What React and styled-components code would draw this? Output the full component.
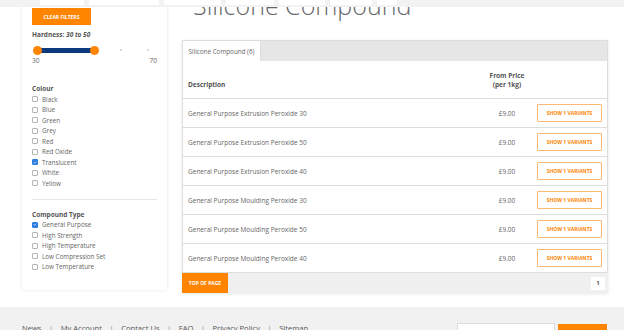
import React from "react";
import styled, { createGlobalStyle } from "styled-components";

const ORANGE = "#ff8400";

const GlobalStyle = createGlobalStyle`
  html, body {
    margin: 0;
    padding: 0;
    background: #fff;
    font-family: "Open Sans", "Liberation Sans", sans-serif;
    color: #666;
  }
  * { box-sizing: border-box; }
`;

// Header (scrolled, only its bottom edge shows)
const TopBar = styled.div`
  position: fixed;
  top: 0;
  left: 0;
  right: 0;
  height: 7px;
  background: #f2f2f2;
  display: flex;
  gap: 5px;
  padding-left: 40px;
  z-index: 5;
`;

const TopTab = styled.div`
  width: ${p => p.w}px;
  height: 5px;
  background: #fff;
`;

const Page = styled.div`
  display: flex;
  align-items: flex-start;
  gap: 15px;
  padding: 0 16px 14px 22px;
`;

// Sidebar
const Sidebar = styled.aside`
  width: 145px;
  height: 290px;
  background: #fff;
  box-shadow: 0 0 3px rgba(0, 0, 0, 0.12);
  padding: 8px 10px 0;
  display: flex;
  flex-direction: column;
`;

const ClearButton = styled.button`
  width: 59px;
  height: 17px;
  border: none;
  background: ${ORANGE};
  color: #fff;
  font-family: inherit;
  font-size: 5px;
  font-weight: 700;
  text-transform: uppercase;
  padding: 0;
  cursor: pointer;
`;

const FilterLabel = styled.div`
  font-size: 6.5px;
  font-weight: 700;
  line-height: 10px;
  color: #555;
  margin-top: ${p => p.mt || 0}px;
  em { font-style: italic; }
`;

const Slider = styled.div`
  position: relative;
  height: 12px;
  margin-top: 4px;
  width: 125px;
`;

const SliderFill = styled.div`
  position: absolute;
  top: 3.5px;
  height: 5px;
  background: #0b3a7c;
`;

const Handle = styled.div`
  position: absolute;
  top: 1.5px;
  width: 9px;
  height: 9px;
  margin-left: -4.5px;
  border-radius: 50%;
  background: ${ORANGE};
`;

const Tick = styled.div`
  position: absolute;
  top: 5px;
  width: 2px;
  height: 2px;
  border-radius: 50%;
  background: #ccc;
`;

const SliderScale = styled.div`
  display: flex;
  justify-content: space-between;
  width: 125px;
  margin-top: 1px;
  font-size: 6.5px;
  line-height: 8px;
  color: #666;
`;

const CheckRow = styled.label`
  display: flex;
  align-items: center;
  gap: 4px;
  height: 10.5px;
  font-size: 6.3px;
  color: #666;
`;

const Box = styled.span`
  width: 6px;
  height: 6px;
  border-radius: 1px;
  border: 0.7px solid ${p => (p.checked ? "#2a7de1" : "#b5b5b5")};
  background: ${p => (p.checked ? "#2a7de1" : "#fff")};
  display: flex;
  align-items: center;
  justify-content: center;
  flex-shrink: 0;
`;

const Divider = styled.hr`
  border: none;
  border-top: 1px solid #e6e6e6;
  margin: 10px 0 0;
  width: 125px;
`;

// Main
const Main = styled.main`
  flex: 1;
  display: flex;
  flex-direction: column;
`;

const Title = styled.h1`
  margin: -8px 0 22px 11px;
  font-size: 25px;
  line-height: 26px;
  font-weight: 300;
  color: #666;
`;

const Panel = styled.section`
  box-shadow: 0 1px 3px rgba(0, 0, 0, 0.1);
`;

const TabBar = styled.div`
  display: flex;
  height: 21px;
  background: #e6e6e6;
  border: 1px solid #ddd;
  border-bottom: none;
`;

const Tab = styled.div`
  width: 78px;
  background: #fff;
  border-right: 1px solid #ddd;
  display: flex;
  align-items: center;
  justify-content: center;
  font-size: 6.3px;
  color: #666;
`;

const Table = styled.div`
  border-left: 1px solid #ddd;
  border-right: 1px solid #ddd;
  background: #fff;
`;

const Row = styled.div`
  display: grid;
  grid-template-columns: 1fr 50px 65px;
  column-gap: 5px;
  align-items: ${p => (p.head ? "end" : "center")};
  height: ${p => (p.head ? 38 : 29)}px;
  padding: ${p => (p.head ? "0 5px 9px" : "0 5px")};
  border-bottom: 1px solid #ddd;
  font-size: 6.5px;
  color: ${p => (p.head ? "#555" : "#666")};
  font-weight: ${p => (p.head ? 700 : 400)};
`;

const HeadCell = styled.div`
  line-height: 9px;
  text-align: ${p => p.align || "left"};
`;

const Price = styled.div`
  text-align: center;
`;

const VariantButton = styled.button`
  height: 18px;
  width: 65px;
  padding: 0;
  background: #fff;
  border: 1px solid #ffb873;
  border-radius: 1px;
  color: ${ORANGE};
  font-family: inherit;
  font-size: 5px;
  font-weight: 700;
  text-transform: uppercase;
`;

const TableFoot = styled.div`
  display: flex;
  justify-content: space-between;
  align-items: center;
  height: 20px;
  background: #f0f0f0;
  padding-right: 3px;
`;

const TopButton = styled.button`
  height: 20px;
  width: 46px;
  border: none;
  padding: 0;
  background: ${ORANGE};
  color: #fff;
  font-family: inherit;
  font-size: 5px;
  font-weight: 700;
  text-transform: uppercase;
`;

const PageNum = styled.div`
  width: 14px;
  height: 13px;
  background: #fff;
  display: flex;
  align-items: center;
  justify-content: center;
  font-size: 6px;
  font-weight: 700;
  color: #555;
`;

// Footer
const Footer = styled.footer`
  background: #f1f1f1;
  display: flex;
  justify-content: space-between;
  align-items: flex-start;
  padding: 16px 17px 10px 22px;
`;

const FooterLinks = styled.nav`
  display: flex;
  align-items: center;
  font-size: 7.6px;
  line-height: 10px;
  color: #555;
`;

const Sep = styled.span`
  margin: 0 7.5px;
  color: #888;
`;

const Subscribe = styled.div`
  display: flex;
  gap: 3px;
`;

const EmailInput = styled.input`
  width: 98px;
  height: 20px;
  border: 1px solid #ddd;
  background: #fff;
  font-family: inherit;
  font-size: 6.5px;
  padding: 0 6px;
  color: #999;
  &::placeholder { color: #bbb; }
`;

const SubscribeButton = styled.button`
  width: 49px;
  height: 20px;
  margin-top: 1px;
  border: none;
  background: ${ORANGE};
  color: #fff;
  font-family: inherit;
  font-size: 5.5px;
  font-weight: 700;
  text-transform: uppercase;
`;

const colours = [
  ["Black", false],
  ["Blue", false],
  ["Green", false],
  ["Grey", false],
  ["Red", false],
  ["Red Oxide", false],
  ["Translucent", true],
  ["White", false],
  ["Yellow", false]
];

const types = [
  ["General Purpose", true],
  ["High Strength", false],
  ["High Temperature", false],
  ["Low Compression Set", false],
  ["Low Temperature", false]
];

const products = [
  "General Purpose Extrusion Peroxide 30",
  "General Purpose Extrusion Peroxide 50",
  "General Purpose Extrusion Peroxide 40",
  "General Purpose Moulding Peroxide 30",
  "General Purpose Moulding Peroxide 50",
  "General Purpose Moulding Peroxide 40"
];

const Check = ({ label, checked }) => (
  <CheckRow>
    <Box checked={checked}>
      {checked && (
        <svg width="5" height="5" viewBox="0 0 10 10">
          <path d="M2 5.2l2 2L8 2.8" fill="none" stroke="#fff" strokeWidth="1.8" />
        </svg>
      )}
    </Box>
    {label}
  </CheckRow>
);

const pos = v => 5 + (v - 30) * (57 / 20);

export default function App() {
  const low = 30;
  const high = 50;
  return (
    <>
      <GlobalStyle />
      <TopBar>
        {[44, 70, 57, 48, 46, 42, 20].map((w, i) => (
          <TopTab key={i} w={w} />
        ))}
      </TopBar>
      <Page>
        <Sidebar>
          <ClearButton>Clear Filters</ClearButton>
          <FilterLabel mt={5}>
            Hardness: <em>30 to 50</em>
          </FilterLabel>
          <Slider>
            <SliderFill style={{ left: pos(low), width: pos(high) - pos(low) }} />
            <Tick style={{ left: 88 }} />
            <Tick style={{ left: 115 }} />
            <Handle style={{ left: pos(low) }} />
            <Handle style={{ left: pos(high) }} />
          </Slider>
          <SliderScale>
            <span>30</span>
            <span>70</span>
          </SliderScale>
          <FilterLabel mt={19}>Colour</FilterLabel>
          {colours.map(([l, c]) => (
            <Check key={l} label={l} checked={c} />
          ))}
          <Divider />
          <FilterLabel mt={10}>Compound Type</FilterLabel>
          {types.map(([l, c]) => (
            <Check key={l} label={l} checked={c} />
          ))}
        </Sidebar>
        <Main>
          <Title>Silicone Compound</Title>
          <Panel>
            <TabBar>
              <Tab>Silicone Compound (6)</Tab>
            </TabBar>
            <Table>
              <Row head>
                <HeadCell>Description</HeadCell>
                <HeadCell align="center">
                  From Price
                  <br />
                  (per 1kg)
                </HeadCell>
                <span />
              </Row>
              {products.map(p => (
                <Row key={p}>
                  <div>{p}</div>
                  <Price>£9.00</Price>
                  <VariantButton>Show 1 Variants</VariantButton>
                </Row>
              ))}
            </Table>
            <TableFoot>
              <TopButton>Top of Page</TopButton>
              <PageNum>1</PageNum>
            </TableFoot>
          </Panel>
        </Main>
      </Page>
      <Footer>
        <FooterLinks>
          News<Sep>|</Sep>My Account<Sep>|</Sep>Contact Us<Sep>|</Sep>FAQ
          <Sep>|</Sep>Privacy Policy<Sep>|</Sep>Sitemap
        </FooterLinks>
        <Subscribe>
          <EmailInput placeholder="Your email address" />
          <SubscribeButton>Subscribe</SubscribeButton>
        </Subscribe>
      </Footer>
    </>
  );
}
